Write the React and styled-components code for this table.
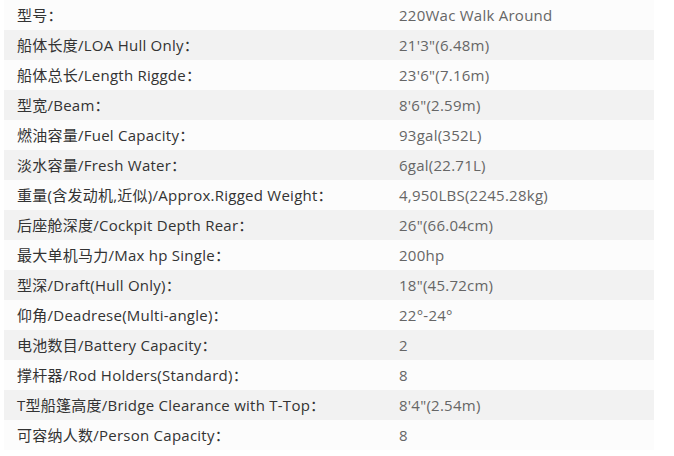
import React from 'react'
import styled, { createGlobalStyle } from 'styled-components'

const specs = [
  ['型号：', '220Wac Walk Around'],
  ['船体长度/LOA Hull Only：', '21\'3"(6.48m)'],
  ['船体总长/Length Riggde：', '23\'6"(7.16m)'],
  ['型宽/Beam：', '8\'6"(2.59m)'],
  ['燃油容量/Fuel Capacity：', '93gal(352L)'],
  ['淡水容量/Fresh Water：', '6gal(22.71L)'],
  ['重量(含发动机,近似)/Approx.Rigged Weight：', '4,950LBS(2245.28kg)'],
  ['后座舱深度/Cockpit Depth Rear：', '26"(66.04cm)'],
  ['最大单机马力/Max hp Single：', '200hp'],
  ['型深/Draft(Hull Only)：', '18"(45.72cm)'],
  ['仰角/Deadrese(Multi-angle)：', '22°-24°'],
  ['电池数目/Battery Capacity：', '2'],
  ['撑杆器/Rod Holders(Standard)：', '8'],
  ['T型船篷高度/Bridge Clearance with T-Top：', '8\'4"(2.54m)'],
  ['可容纳人数/Person Capacity：', '8'],
]

function App() {
  return (
    <>
      <GlobalStyle />
      <SpecTable>
        {specs.map(([label, value], i) => (
          <Row key={i} $even={i % 2 === 1}>
            <Label>{label}</Label>
            <Value>{value}</Value>
          </Row>
        ))}
      </SpecTable>
    </>
  )
}

const GlobalStyle = createGlobalStyle`
    body {
        margin: 0;
        background: #fff;
        font-family: 'Open Sans', 'Noto Sans CJK SC', sans-serif;
    }
`;

const SpecTable = styled.div`
    width: 650px;
    margin-left: 4px;
    display: flex;
    flex-direction: column;
`;

const Row = styled.div`
    display: grid;
    grid-template-columns: 382px 1fr;
    height: 30px;
    align-items: center;
    background: ${p => (p.$even ? '#f2f2f2' : '#fcfcfc')};
    font-size: 15px;
    letter-spacing: 0.25px;
    line-height: 30px;
`;

const Label = styled.div`
    padding-left: 13px;
    color: #333;
    white-space: nowrap;
`;

const Value = styled.div`
    padding-left: 13px;
    color: #666;
    white-space: nowrap;
`;

export default App
